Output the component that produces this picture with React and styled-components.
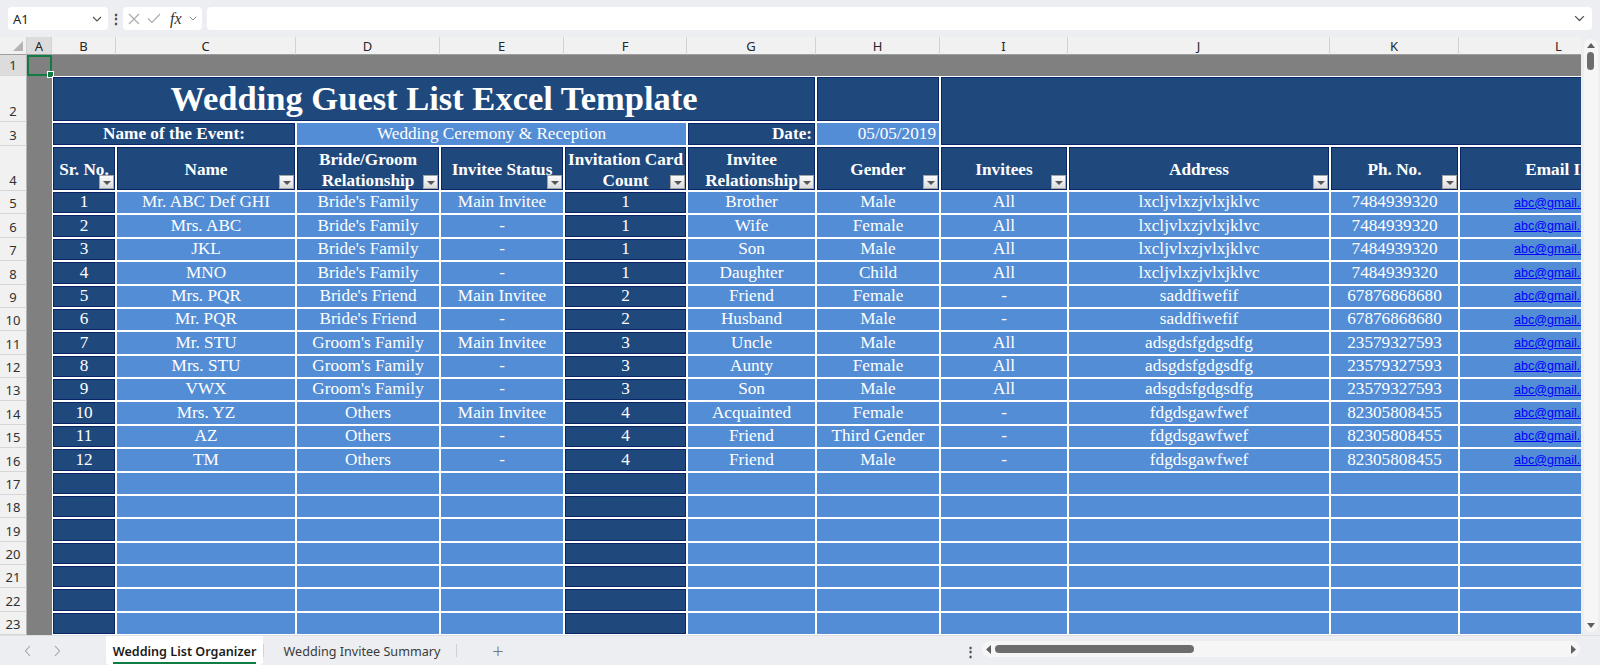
import React from "react";
import styled, { createGlobalStyle } from "styled-components";

const DARK = "#1f497d";
const LIGHT = "#538dd5";
const NAVY = "#0a2468";
const GRAY = "#808080";
const UI_FONT = `"Noto Sans", "Open Sans", sans-serif`;
const CELL_FONT = `"Liberation Serif", "Times New Roman", serif`;

const COLS = [27, 25, 64, 180, 144, 124, 123, 129, 124, 128, 262, 129, 200];
const LETTERS = ["A", "B", "C", "D", "E", "F", "G", "H", "I", "J", "K", "L"];

const Global = createGlobalStyle`
  html, body { margin: 0; padding: 0; overflow: hidden; background: #eceef1; }
  body { width: 1600px; height: 665px; font-family: ${UI_FONT}; }
  #root { width: 1600px; height: 665px; }
`;

const Window = styled.div`
  width: 1600px;
  height: 665px;
  display: flex;
  flex-direction: column;
  background: #eceef1;
`;

/* ---------- formula bar ---------- */
const TopBar = styled.div`
  height: 37px;
  display: flex;
  align-items: center;
  padding: 0 8px;
  box-sizing: border-box;
`;

const Box = styled.div`
  height: 23px;
  background: #fff;
  border-radius: 4px;
  display: flex;
  align-items: center;
  box-sizing: border-box;
`;

const NameBox = styled(Box)`
  width: 100px;
  justify-content: space-between;
  padding: 0 6px 0 5px;
  font: 13px ${UI_FONT};
  color: #222;
`;

const Dots = styled.div`
  width: 15px;
  display: flex;
  justify-content: center;
  font: bold 14px ${UI_FONT};
  color: #444;
`;

const FxBox = styled(Box)`
  width: 79px;
  padding: 0 4px 0 5px;
  gap: 7px;
`;

const Fx = styled.span`
  font: italic 16px ${CELL_FONT};
  color: #333;
  margin-left: 2px;
`;

const FormulaInput = styled(Box)`
  flex: 1;
  margin-left: 5px;
  justify-content: flex-end;
  padding-right: 7px;
`;

/* ---------- sheet ---------- */
const Sheet = styled.div`
  height: 598px;
  display: flex;
`;

const Viewport = styled.div`
  width: 1581px;
  height: 100%;
  overflow: hidden;
  background: #fff;
`;

const Grid = styled.div`
  display: grid;
  grid-template-columns: ${COLS.map((c) => c + "px").join(" ")};
  grid-template-rows: 18px 21px 46px 24px 45px repeat(20, 23.38px);
  width: max-content;
`;

const Corner = styled.div`
  grid-row: 1;
  grid-column: 1;
  background: #f1f1f1;
  border-right: 1px solid #d0d0d0;
  border-bottom: 1px solid #9e9e9e;
  box-sizing: border-box;
  display: flex;
  align-items: flex-end;
  justify-content: flex-end;
  padding: 0 3px 3px 0;
`;

const ColHead = styled.div`
  grid-row: 1;
  background: ${(p) => (p.$active ? "#dcdcdc" : "#f1f1f1")};
  border-right: 1px solid #d3d3d3;
  border-bottom: 1px solid #9e9e9e;
  box-sizing: border-box;
  display: flex;
  align-items: center;
  justify-content: center;
  font: 13px ${UI_FONT};
  color: #262626;
  overflow: hidden;
`;

const RowHead = styled.div`
  grid-column: 1;
  background: ${(p) => (p.$active ? "#dcdcdc" : "#f1f1f1")};
  border-bottom: 1px solid #d6d6d6;
  border-right: 1px solid #b5b5b5;
  box-sizing: border-box;
  display: flex;
  align-items: flex-end;
  justify-content: center;
  padding-bottom: 1px;
  font: 13px ${UI_FONT};
  color: #303030;
  overflow: hidden;
`;

const GrayRow = styled.div`
  grid-row: 2;
  grid-column: 2 / -1;
  background: ${GRAY};
`;

const GrayCol = styled.div`
  grid-row: 3 / -1;
  grid-column: 2;
  background: ${GRAY};
`;

const Selection = styled.div`
  grid-row: 2;
  grid-column: 2;
  border: 2px solid #107c41;
  position: relative;
  box-sizing: border-box;
  &::after {
    content: "";
    position: absolute;
    right: -4px;
    bottom: -4px;
    width: 5px;
    height: 5px;
    background: #107c41;
    border: 1px solid #fff;
  }
`;

const Cell = styled.div`
  grid-column: ${(p) => p.$col};
  grid-row: ${(p) => p.$row};
  box-sizing: border-box;
  border: 1px solid #fff;
  background: ${(p) => (p.$dark ? DARK : LIGHT)};
  box-shadow: ${(p) => (p.$dark ? `inset 0 0 0 1px ${NAVY}` : "none")};
  color: #fff;
  font-family: ${CELL_FONT};
  font-size: ${(p) => p.$size || 17.2}px;
  font-weight: ${(p) => (p.$bold ? 700 : 400)};
  line-height: ${(p) => (p.$size ? 1.1 : "20.5px")};
  display: flex;
  align-items: center;
  justify-content: ${(p) => (p.$align === "right" ? "flex-end" : "center")};
  text-align: center;
  padding: ${(p) => p.$padTop || 0}px 3px 0;
  white-space: nowrap;
  overflow: hidden;
  position: relative;
`;

const Link = styled.span`
  font: 12.5px "Liberation Sans", Arial, sans-serif;
  color: #0000ff;
  text-decoration: underline;
`;

const Filter = styled.span`
  position: absolute;
  right: 1px;
  bottom: 1px;
  width: 15px;
  height: 14px;
  box-sizing: border-box;
  border: 1px solid #a4a4a4;
  background: linear-gradient(#fbfbfb, #dcdcdc);
  display: flex;
  align-items: center;
  justify-content: center;
  &::before {
    content: "";
    border-left: 4px solid transparent;
    border-right: 4px solid transparent;
    border-top: 4px solid #555;
    margin-top: 1px;
  }
`;

/* ---------- scrollbars ---------- */
const VScroll = styled.div`
  width: 19px;
  display: flex;
  justify-content: center;
  padding: 2px 0 3px;
  box-sizing: border-box;
`;

const VTrack = styled.div`
  width: 14px;
  background: #f6f6f6;
  border-radius: 7px;
  display: flex;
  flex-direction: column;
  align-items: center;
  padding: 4px 0 4px;
  box-sizing: border-box;
`;

const VThumb = styled.div`
  width: 7px;
  height: 18px;
  border-radius: 4px;
  background: #6d6d6d;
  margin-top: 4px;
`;

const Spacer = styled.div`
  flex: 1;
`;

/* ---------- sheet tabs ---------- */
const BottomBar = styled.div`
  height: 30px;
  display: flex;
  align-items: stretch;
  border-top: 1px solid #dedfe2;
  box-sizing: border-box;
`;

const Nav = styled.div`
  width: 28px;
  display: flex;
  align-items: center;
  justify-content: center;
  margin-left: ${(p) => p.$ml || 0}px;
`;

const Tab = styled.div`
  display: flex;
  align-items: center;
  justify-content: center;
  width: ${(p) => p.$w}px;
  margin-left: ${(p) => p.$ml || 0}px;
  background: ${(p) => (p.$active ? "#fff" : "transparent")};
  border-radius: 0 0 4px 4px;
`;

const TabLabel = styled.span`
  font: ${(p) => (p.$active ? 600 : 400)} 12.6px ${UI_FONT};
  color: ${(p) => (p.$active ? "#1b1b1b" : "#3a3a3a")};
  padding: 3px 0 2px;
  border-bottom: 2px solid ${(p) => (p.$active ? "#107c41" : "transparent")};
  margin-top: 2px;
`;

const Sep = styled.div`
  width: 1px;
  background: #cfd1d4;
  margin: 8px 0;
`;

const Plus = styled.div`
  width: 30px;
  margin-left: 26px;
  display: flex;
  align-items: center;
  justify-content: center;
  font: 300 20px ${UI_FONT};
  color: #777;
`;

const BarDots = styled.div`
  width: 14px;
  display: flex;
  align-items: center;
  justify-content: center;
  font: bold 13px ${UI_FONT};
  color: #444;
  margin-right: 5px;
`;

const HTrack = styled.div`
  width: 598px;
  margin: 5px 20px 8px 0;
  background: #f6f6f6;
  border-radius: 8px;
  display: flex;
  align-items: center;
  padding: 0 4px;
  box-sizing: border-box;
  gap: 4px;
`;

const HThumb = styled.div`
  width: 199px;
  height: 8px;
  border-radius: 4px;
  background: #6d6d6d;
`;

/* ---------- small drawings ---------- */
const Chevron = ({ size = 10, color = "#444" }) => (
  <svg width={size} height={size * 0.6} viewBox="0 0 10 6">
    <path d="M1 1 L5 5 L9 1" fill="none" stroke={color} strokeWidth="1.2" />
  </svg>
);

const Tri = ({ dir, color = "#666", w = 7, h = 5 }) => {
  const pts = {
    up: `0,${h} ${w / 2},0 ${w},${h}`,
    down: `0,0 ${w / 2},${h} ${w},0`,
    left: `${h},0 0,${w / 2} ${h},${w}`,
    right: `0,0 ${h},${w / 2} 0,${w}`,
  }[dir];
  const vw = dir === "left" || dir === "right" ? h : w;
  const vh = dir === "left" || dir === "right" ? w : h;
  return (
    <svg width={vw} height={vh} viewBox={`0 0 ${vw} ${vh}`}>
      <polygon points={pts} fill={color} />
    </svg>
  );
};

const Angle = ({ dir }) => (
  <svg width="8" height="12" viewBox="0 0 8 12">
    <path
      d={dir === "left" ? "M6 1 L1.5 6 L6 11" : "M2 1 L6.5 6 L2 11"}
      fill="none"
      stroke="#a3a3a3"
      strokeWidth="1.1"
    />
  </svg>
);

/* ---------- data ---------- */
const HEADERS = [
  ["Sr. No."],
  ["Name"],
  ["Bride/Groom", "Relationship"],
  ["Invitee Status"],
  ["Invitation Card", "Count"],
  ["Invitee", "Relationship"],
  ["Gender"],
  ["Invitees"],
  ["Address"],
  ["Ph. No."],
  ["Email ID"],
];

const A1 = "lxcljvlxzjvlxjklvc";
const A2 = "saddfiwefif";
const A3 = "adsgdsfgdgsdfg";
const A4 = "fdgdsgawfwef";

const GUESTS = [
  [1, "Mr. ABC Def GHI", "Bride's Family", "Main Invitee", 1, "Brother", "Male", "All", A1, "7484939320"],
  [2, "Mrs. ABC", "Bride's Family", "-", 1, "Wife", "Female", "All", A1, "7484939320"],
  [3, "JKL", "Bride's Family", "-", 1, "Son", "Male", "All", A1, "7484939320"],
  [4, "MNO", "Bride's Family", "-", 1, "Daughter", "Child", "All", A1, "7484939320"],
  [5, "Mrs. PQR", "Bride's Friend", "Main Invitee", 2, "Friend", "Female", "-", A2, "67876868680"],
  [6, "Mr. PQR", "Bride's Friend", "-", 2, "Husband", "Male", "-", A2, "67876868680"],
  [7, "Mr. STU", "Groom's Family", "Main Invitee", 3, "Uncle", "Male", "All", A3, "23579327593"],
  [8, "Mrs. STU", "Groom's Family", "-", 3, "Aunty", "Female", "All", A3, "23579327593"],
  [9, "VWX", "Groom's Family", "-", 3, "Son", "Male", "All", A3, "23579327593"],
  [10, "Mrs. YZ", "Others", "Main Invitee", 4, "Acquainted", "Female", "-", A4, "82305808455"],
  [11, "AZ", "Others", "-", 4, "Friend", "Third Gender", "-", A4, "82305808455"],
  [12, "TM", "Others", "-", 4, "Friend", "Male", "-", A4, "82305808455"],
];

const EMPTY_ROWS = 8;
const TOTAL_ROWS = 24;

// sheet column B sits on grid column 3; B and F carry the dark fill
const isDarkCol = (i) => i === 0 || i === 4;

export default function App() {
  const rowHeads = [];
  for (let r = 1; r <= TOTAL_ROWS; r++) {
    rowHeads.push(
      <RowHead key={"rh" + r} $active={r === 1} style={{ gridRow: r + 1 }}>
        {r}
      </RowHead>
    );
  }

  const body = [];
  GUESTS.forEach((g, ri) => {
    const row = ri + 6;
    g.forEach((v, ci) => {
      body.push(
        <Cell key={`d${ri}-${ci}`} $row={row} $col={ci + 3} $dark={isDarkCol(ci)}>
          {v}
        </Cell>
      );
    });
    body.push(
      <Cell key={`e${ri}`} $row={row} $col={13}>
        <Link>abc@gmail.com</Link>
      </Cell>
    );
  });
  for (let k = 0; k < EMPTY_ROWS; k++) {
    const row = GUESTS.length + 6 + k;
    for (let ci = 0; ci < 11; ci++) {
      body.push(<Cell key={`x${k}-${ci}`} $row={row} $col={ci + 3} $dark={isDarkCol(ci)} />);
    }
  }

  return (
    <Window>
      <Global />
      <TopBar>
        <NameBox>
          <span>A1</span>
          <Chevron size={10} color="#555" />
        </NameBox>
        <Dots>⋮</Dots>
        <FxBox>
          <svg width="12" height="12" viewBox="0 0 12 12">
            <path d="M1 1 L11 11 M11 1 L1 11" stroke="#a9a9a9" strokeWidth="1.1" />
          </svg>
          <svg width="14" height="11" viewBox="0 0 14 11">
            <path d="M1 5.5 L5 9.5 L13 1" fill="none" stroke="#a9a9a9" strokeWidth="1.1" />
          </svg>
          <Fx>fx</Fx>
          <Chevron size={8} color="#888" />
        </FxBox>
        <FormulaInput>
          <Chevron size={11} color="#555" />
        </FormulaInput>
      </TopBar>

      <Sheet>
        <Viewport>
          <Grid>
            <Corner>
              <svg width="10" height="10" viewBox="0 0 10 10">
                <polygon points="10,0 10,10 0,10" fill="#b4b4b4" />
              </svg>
            </Corner>
            {LETTERS.map((l, i) => (
              <ColHead key={l} $active={l === "A"} style={{ gridColumn: i + 2 }}>
                {l}
              </ColHead>
            ))}
            {rowHeads}
            <GrayRow />
            <GrayCol />
            <Selection />

            <Cell $row={3} $col="3 / 9" $dark $bold $size={34.5}>
              Wedding Guest List Excel Template
            </Cell>
            <Cell $row={3} $col={9} $dark />
            <Cell $row="3 / 5" $col="10 / 14" $dark />

            <Cell $row={4} $col="3 / 5" $dark $bold>
              Name of the Event:
            </Cell>
            <Cell $row={4} $col="5 / 8">
              Wedding Ceremony &amp; Reception
            </Cell>
            <Cell $row={4} $col={8} $dark $bold $align="right">
              Date:
            </Cell>
            <Cell $row={4} $col={9} $align="right">
              05/05/2019
            </Cell>

            {HEADERS.map((h, i) => (
              <Cell key={"h" + i} $row={5} $col={i + 3} $dark $bold $padTop={4}>
                <span>
                  {h.map((line, j) => (
                    <React.Fragment key={j}>
                      {j > 0 && <br />}
                      {line}
                    </React.Fragment>
                  ))}
                </span>
                {i < 10 && <Filter />}
              </Cell>
            ))}

            {body}
          </Grid>
        </Viewport>
        <VScroll>
          <VTrack>
            <Tri dir="up" color="#5f5f5f" w={8} h={5} />
            <VThumb />
            <Spacer />
            <Tri dir="down" color="#5f5f5f" w={8} h={5} />
          </VTrack>
        </VScroll>
      </Sheet>

      <BottomBar>
        <Nav $ml={14}>
          <Angle dir="left" />
        </Nav>
        <Nav $ml={1}>
          <Angle dir="right" />
        </Nav>
        <Tab $active $w={157} $ml={35}>
          <TabLabel $active>Wedding List Organizer</TabLabel>
        </Tab>
        <Sep />
        <Tab $w={188} $ml={4}>
          <TabLabel>Wedding Invitee Summary</TabLabel>
        </Tab>
        <Sep />
        <Plus>+</Plus>
        <Spacer />
        <BarDots>⋮</BarDots>
        <HTrack>
          <Tri dir="left" color="#5f5f5f" w={9} h={5} />
          <HThumb />
          <Spacer />
          <Tri dir="right" color="#5f5f5f" w={9} h={5} />
        </HTrack>
      </BottomBar>
    </Window>
  );
}
